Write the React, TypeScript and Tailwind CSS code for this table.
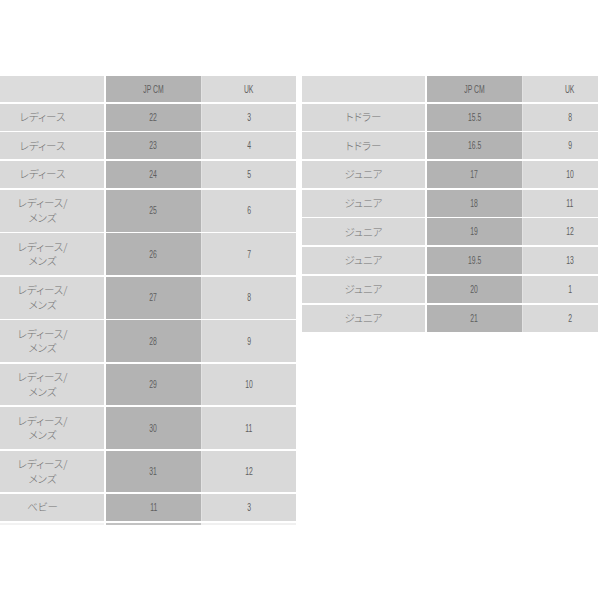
import React from "react";

type Row = { label: string[]; jp: string; uk: string };

const leftRows: Row[] = [
  { label: ["レディース"], jp: "22", uk: "3" },
  { label: ["レディース"], jp: "23", uk: "4" },
  { label: ["レディース"], jp: "24", uk: "5" },
  { label: ["レディース/", "メンズ"], jp: "25", uk: "6" },
  { label: ["レディース/", "メンズ"], jp: "26", uk: "7" },
  { label: ["レディース/", "メンズ"], jp: "27", uk: "8" },
  { label: ["レディース/", "メンズ"], jp: "28", uk: "9" },
  { label: ["レディース/", "メンズ"], jp: "29", uk: "10" },
  { label: ["レディース/", "メンズ"], jp: "30", uk: "11" },
  { label: ["レディース/", "メンズ"], jp: "31", uk: "12" },
  { label: ["ベビー"], jp: "11", uk: "3" },
];

const rightRows: Row[] = [
  { label: ["トドラー"], jp: "15.5", uk: "8" },
  { label: ["トドラー"], jp: "16.5", uk: "9" },
  { label: ["ジュニア"], jp: "17", uk: "10" },
  { label: ["ジュニア"], jp: "18", uk: "11" },
  { label: ["ジュニア"], jp: "19", uk: "12" },
  { label: ["ジュニア"], jp: "19.5", uk: "13" },
  { label: ["ジュニア"], jp: "20", uk: "1" },
  { label: ["ジュニア"], jp: "21", uk: "2" },
];

function Num({ children }: { children: React.ReactNode }) {
  return (
    <span className="inline-block scale-x-[0.62] whitespace-nowrap font-['Liberation_Sans',Arial,sans-serif] text-[11px] leading-none text-[#5e5e5e]">
      {children}
    </span>
  );
}

function Label({ lines }: { lines: string[] }) {
  return (
    <div className="flex flex-col items-center font-['Noto_Sans_CJK_JP','Noto_Sans',sans-serif] text-[10.5px] font-light leading-[14.5px] text-[#737373] [font-feature-settings:'palt']">
      {lines.map((l, i) => (
        <span key={i}>{l}</span>
      ))}
    </div>
  );
}

function SizeTable({ rows, tail }: { rows: Row[]; tail?: boolean }) {
  return (
    <div className="flex w-[315px] flex-col gap-[1.7px]">
      <div className="flex h-[26px]">
        <div className="w-[123px] bg-[#dcdcdc]" />
        <div className="w-[2px] bg-white" />
        <div className="flex w-[95px] items-center justify-center bg-[#b3b3b3]">
          <Num>JP CM</Num>
        </div>
        <div className="flex w-[95px] items-center justify-center border-l border-[#e2e2e2] bg-[#dadada]">
          <Num>UK</Num>
        </div>
      </div>
      {rows.map((r, i) => (
        <div key={i} className={`flex ${r.label.length > 1 ? "h-[41.8px]" : "h-[27px]"}`}>
          <div className="flex w-[123px] items-center justify-center bg-[#d9d9d9]">
            <Label lines={r.label} />
          </div>
          <div className="w-[2px] bg-white" />
          <div className="flex w-[95px] items-center justify-center bg-[#b3b3b3]">
            <Num>{r.jp}</Num>
          </div>
          <div className="flex w-[95px] items-center justify-center border-l border-[#e2e2e2] bg-[#d9d9d9]">
            <Num>{r.uk}</Num>
          </div>
        </div>
      ))}
      {tail && (
        <div className="flex h-[2px]">
          <div className="w-[123px] bg-[#f2f2f2]" />
          <div className="w-[2px] bg-white" />
          <div className="w-[95px] bg-[#c2c2c2]" />
          <div className="w-[95px] bg-[#f0f0f0]" />
        </div>
      )}
    </div>
  );
}

export default function App() {
  return (
    <div className="h-[600px] w-[600px] overflow-hidden bg-white">
      <div className="flex gap-[6px] pt-[76px]">
        <div className="w-[296px] overflow-hidden">
          <div className="ml-[-19px]">
            <SizeTable rows={leftRows} tail />
          </div>
        </div>
        <div className="w-[296px] overflow-hidden">
          <SizeTable rows={rightRows} />
        </div>
      </div>
    </div>
  );
}
